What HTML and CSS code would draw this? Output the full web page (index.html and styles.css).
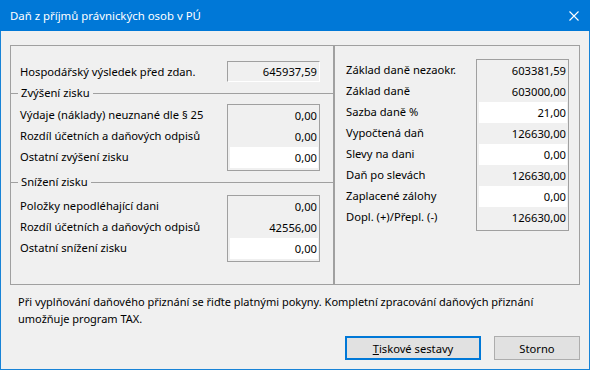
FILE: index.html
```html
<!DOCTYPE html>
<html lang="cs">
<head>
<meta charset="utf-8">
<title>Daň z příjmů právnických osob v PÚ</title>
<link rel="stylesheet" href="styles.css">
</head>
<body>
<div class="window">
  <div class="titlebar">
    <span class="title">Daň z příjmů právnických osob v PÚ</span>
    <svg class="close" width="10" height="10" viewBox="0 0 10 10"><path d="M0.5 0.5L9.5 9.5M9.5 0.5L0.5 9.5" stroke="#fff" stroke-width="1.1" fill="none"/></svg>
  </div>
  <div class="content">
    <div class="panel">
      <div class="col-left">
        <div class="top-row">
          <span class="label">Hospodářský výsledek před zdan.</span>
          <span class="field">645937,59</span>
        </div>
        <div class="gtitle"><span>Zvýšení zisku</span></div>
        <div class="group g1">
          <div class="labels">
            <div>Výdaje (náklady) neuznané dle § 25</div>
            <div>Rozdíl účetních a daňových odpisů</div>
            <div>Ostatní zvýšení zisku</div>
          </div>
          <div class="box">
            <div class="val">0,00</div>
            <div class="val">0,00</div>
            <div class="val input">0,00</div>
          </div>
        </div>
        <div class="gtitle g2t"><span>Snížení zisku</span></div>
        <div class="group g2">
          <div class="labels">
            <div>Položky nepodléhající dani</div>
            <div>Rozdíl účetních a daňových odpisů</div>
            <div>Ostatní snížení zisku</div>
          </div>
          <div class="box">
            <div class="val">0,00</div>
            <div class="val">42556,00</div>
            <div class="val input">0,00</div>
          </div>
        </div>
      </div>
      <div class="divider"></div>
      <div class="col-right">
        <div class="group">
          <div class="labels">
            <div>Základ daně nezaokr.</div>
            <div>Základ daně</div>
            <div>Sazba daně %</div>
            <div>Vypočtená daň</div>
            <div>Slevy na dani</div>
            <div>Daň po slevách</div>
            <div>Zaplacené zálohy</div>
            <div>Dopl. (+)/Přepl. (-)</div>
          </div>
          <div class="box">
            <div class="val">603381,59</div>
            <div class="val">603000,00</div>
            <div class="val input">21,00</div>
            <div class="val">126630,00</div>
            <div class="val input">0,00</div>
            <div class="val">126630,00</div>
            <div class="val input">0,00</div>
            <div class="val">126630,00</div>
          </div>
        </div>
      </div>
    </div>
    <p class="note">Při vyplňování daňového přiznání se řiďte platnými pokyny. Kompletní zpracování daňových přiznání umožňuje program TAX.</p>
    <div class="buttons">
      <button class="btn btn-default"><u>T</u>iskové sestavy</button>
      <button class="btn btn-cancel">Storno</button>
    </div>
  </div>
</div>
</body>
</html>
```

FILE: styles.css
```css
* { box-sizing: border-box; }

body {
  margin: 0;
  background: #f0f0f0;
  font-family: "Noto Sans", "Open Sans", sans-serif;
  font-size: 11.2px;
  color: #000;
}

.window {
  width: 590px;
  height: 370px;
  background: #f0f0f0;
  border: 1px solid #1883d7;
  border-top: none;
  display: flex;
  flex-direction: column;
}

.titlebar {
  height: 31px;
  margin: 0 -1px;
  background: #0078d7;
  color: #fff;
  display: flex;
  align-items: center;
  justify-content: space-between;
  padding: 0 11px 0 10px;
}

.title {
  font-size: 11.4px;
  line-height: 16px;
}

.close { display: block; }

.content {
  flex: 1;
  display: flex;
  flex-direction: column;
  padding: 14px 9px 0 9px;
}

.panel {
  height: 240px;
  border: 1px solid #a0a0a0;
  display: flex;
}

.col-left {
  width: 322px;
}

.top-row {
  display: flex;
  align-items: center;
  height: 21px;
  margin-top: 15px;
  padding: 0 13px 0 9px;
}

.top-row .label { flex: 1; }

.field {
  width: 93px;
  height: 21px;
  border: 1px solid;
  border-color: #a0a0a0 #fff #fff #a0a0a0;
  text-align: right;
  padding-right: 2px;
  line-height: 19px;
}

.gtitle {
  display: flex;
  align-items: flex-start;
  height: 16px;
  margin-top: 3px;
}

.gtitle::before,
.gtitle::after {
  content: "";
  height: 1px;
  background: #a0a0a0;
  margin-top: 8px;
}

.gtitle::before { width: 7px; }
.gtitle::after { flex: 1; }

.gtitle span {
  padding: 0 3px;
  line-height: 16px;
}

.g2t { margin-top: 3px; }

.group {
  display: flex;
  padding: 0 13px 0 9px;
  margin-top: 3px;
}

.g2 { margin-top: 5px; }

.labels { flex: 1; }

.labels div {
  height: 21px;
  line-height: 21px;
  white-space: nowrap;
}

.box {
  width: 93px;
  border: 1px solid #a0a0a0;
  padding: 0 1px 2px 2px;
}

.val {
  height: 21px;
  line-height: 21px;
  text-align: right;
  padding-right: 1px;
}

.val.input { background: #fff; }

.divider {
  width: 2px;
  background: #a0a0a0;
}

.col-right {
  flex: 1;
  padding: 13px 0 0 0;
}

.col-right .group {
  padding: 0 10px 0 11px;
  margin-top: 0;
}

.note {
  margin: 8px 0 0 8px;
  font-size: 11px;
  line-height: 17px;
}

.buttons {
  display: flex;
  justify-content: flex-end;
  gap: 13px;
  margin-top: auto;
  margin-bottom: 9px;
}

.btn {
  height: 24px;
  border: 1px solid #adadad;
  background: #e1e1e1;
  font: inherit;
  color: #000;
  padding: 0;
}

.btn-default {
  width: 136px;
  border: 2px solid #0078d7;
}

.btn-cancel { width: 86px; }
```
